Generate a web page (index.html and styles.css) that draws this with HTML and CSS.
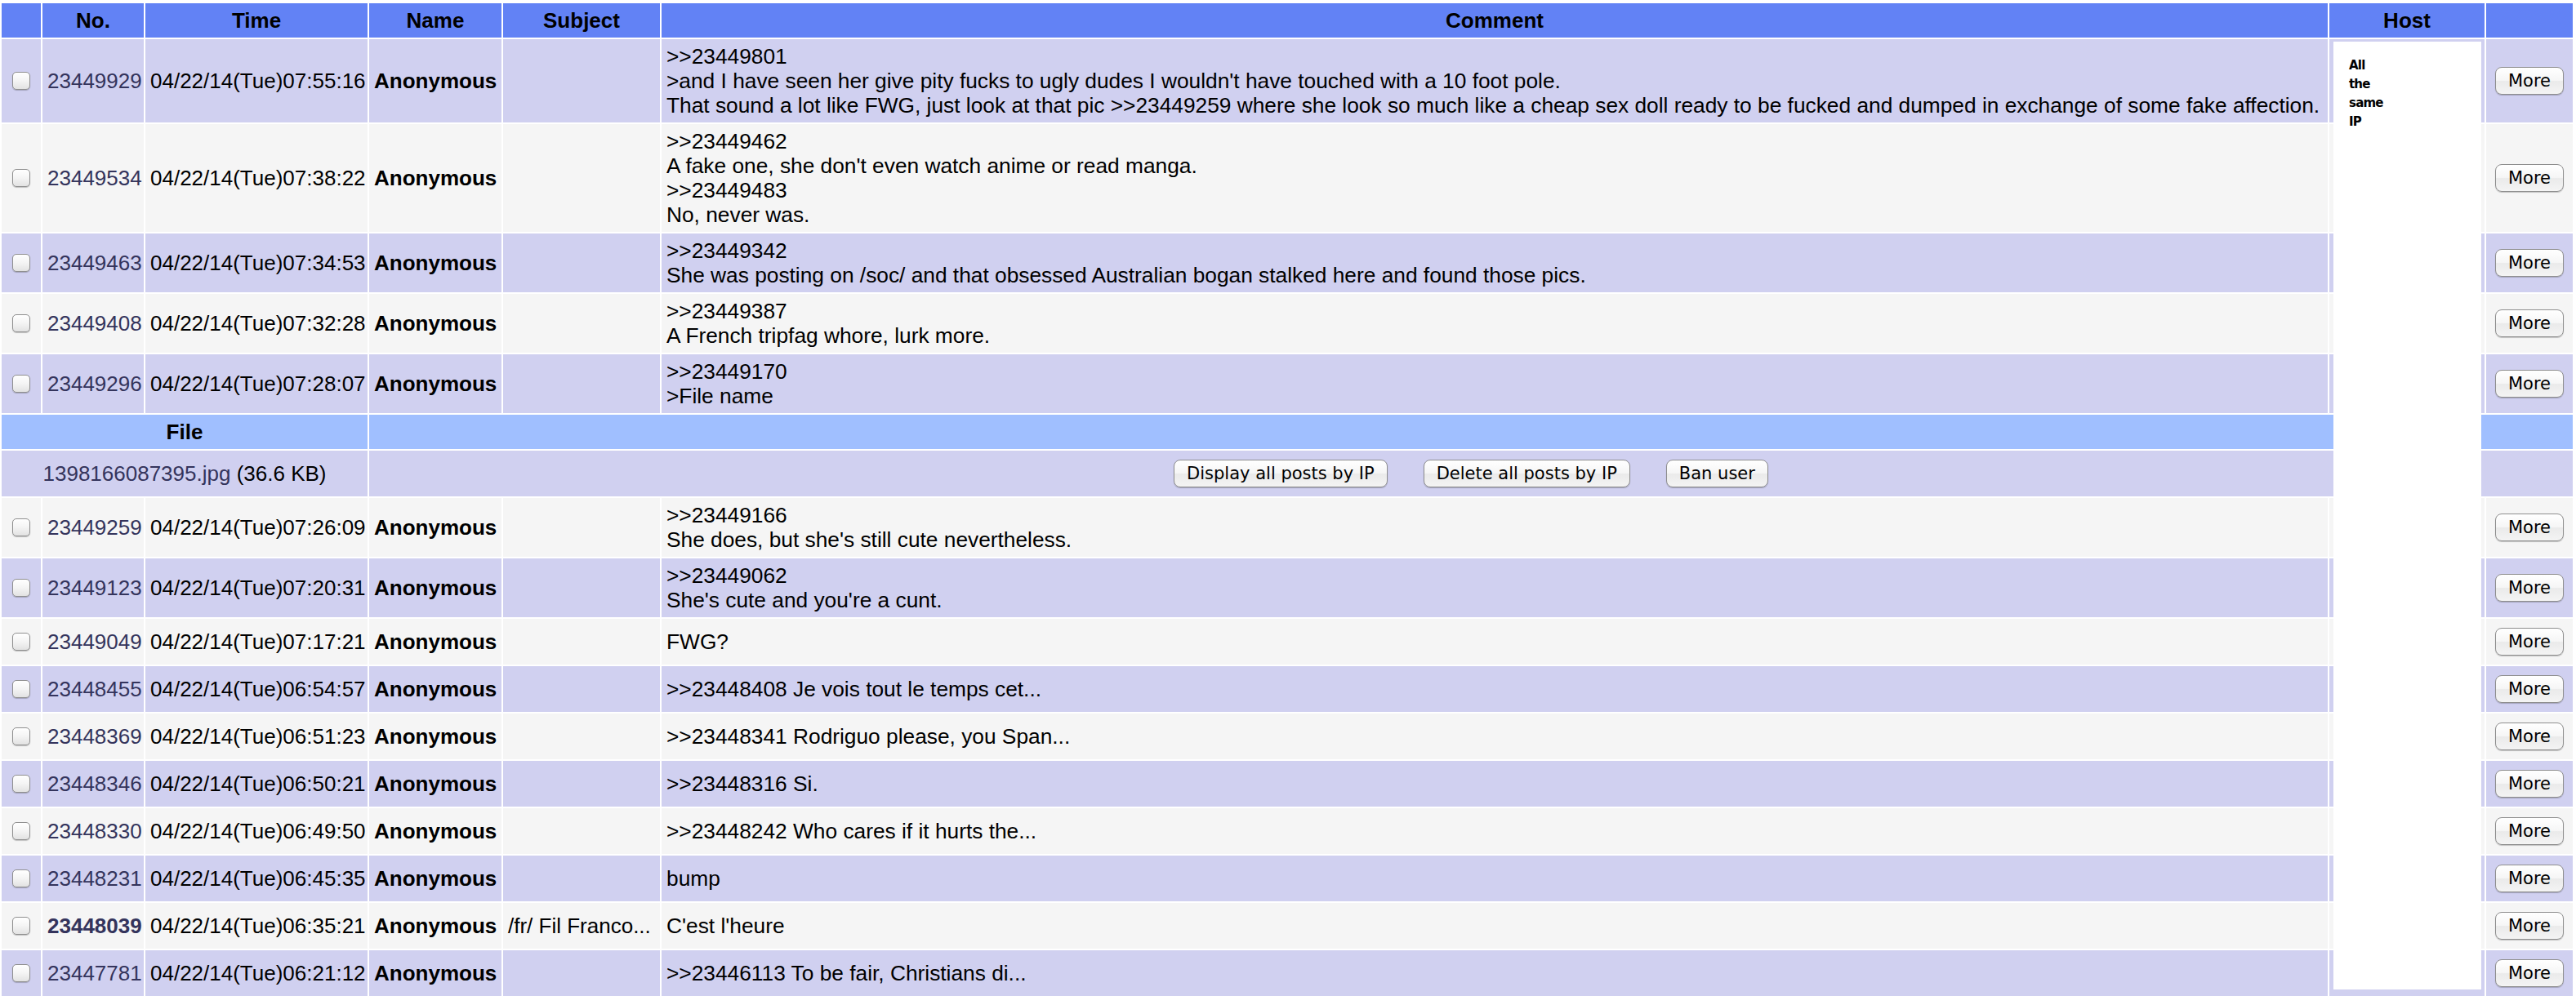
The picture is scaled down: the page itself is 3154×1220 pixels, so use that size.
FILE: index.html
```html
<!DOCTYPE html>
<html>
<head>
<meta charset="utf-8">
<title>Posts</title>
<link rel="stylesheet" href="styles.css">
</head>
<body>
<div class="wrap">
<table class="posts">
  <thead>
    <tr class="head">
      <th class="c-cb"></th>
      <th class="c-no">No.</th>
      <th class="c-time">Time</th>
      <th class="c-name">Name</th>
      <th class="c-subj">Subject</th>
      <th class="c-com">Comment</th>
      <th class="c-host">Host</th>
      <th class="c-more"></th>
    </tr>
  </thead>
  <tbody>
    <tr class="row-a">
      <td><input type="checkbox" class="cb"></td>
      <td><a class="pno">23449929</a></td>
      <td>04/22/14(Tue)07:55:16</td>
      <td class="name">Anonymous</td>
      <td></td>
      <td class="com">&gt;&gt;23449801<br>&gt;and I have seen her give pity fucks to ugly dudes I wouldn't have touched with a 10 foot pole.<br>That sound a lot like FWG, just look at that pic &gt;&gt;23449259 where she look so much like a cheap sex doll ready to be fucked and dumped in exchange of some fake affection.</td>
      <td></td>
      <td class="more"><button class="btn">More</button></td>
    </tr>
    <tr class="row-b">
      <td><input type="checkbox" class="cb"></td>
      <td><a class="pno">23449534</a></td>
      <td>04/22/14(Tue)07:38:22</td>
      <td class="name">Anonymous</td>
      <td></td>
      <td class="com">&gt;&gt;23449462<br>A fake one, she don't even watch anime or read manga.<br>&gt;&gt;23449483<br>No, never was.</td>
      <td></td>
      <td class="more"><button class="btn">More</button></td>
    </tr>
    <tr class="row-a">
      <td><input type="checkbox" class="cb"></td>
      <td><a class="pno">23449463</a></td>
      <td>04/22/14(Tue)07:34:53</td>
      <td class="name">Anonymous</td>
      <td></td>
      <td class="com">&gt;&gt;23449342<br>She was posting on /soc/ and that obsessed Australian bogan stalked here and found those pics.</td>
      <td></td>
      <td class="more"><button class="btn">More</button></td>
    </tr>
    <tr class="row-b">
      <td><input type="checkbox" class="cb"></td>
      <td><a class="pno">23449408</a></td>
      <td>04/22/14(Tue)07:32:28</td>
      <td class="name">Anonymous</td>
      <td></td>
      <td class="com">&gt;&gt;23449387<br>A French tripfag whore, lurk more.</td>
      <td></td>
      <td class="more"><button class="btn">More</button></td>
    </tr>
    <tr class="row-a">
      <td><input type="checkbox" class="cb"></td>
      <td><a class="pno">23449296</a></td>
      <td>04/22/14(Tue)07:28:07</td>
      <td class="name">Anonymous</td>
      <td></td>
      <td class="com">&gt;&gt;23449170<br>&gt;File name</td>
      <td></td>
      <td class="more"><button class="btn">More</button></td>
    </tr>
    <tr class="file-head">
      <th colspan="3">File</th>
      <th colspan="5"></th>
    </tr>
    <tr class="row-a">
      <td colspan="3" class="fname"><a class="pno">1398166087395.jpg</a> (36.6 KB)</td>
      <td colspan="5">
        <div class="actions">
          <button class="btn">Display all posts by IP</button>
          <button class="btn">Delete all posts by IP</button>
          <button class="btn">Ban user</button>
        </div>
      </td>
    </tr>
    <tr class="row-b">
      <td><input type="checkbox" class="cb"></td>
      <td><a class="pno">23449259</a></td>
      <td>04/22/14(Tue)07:26:09</td>
      <td class="name">Anonymous</td>
      <td></td>
      <td class="com">&gt;&gt;23449166<br>She does, but she's still cute nevertheless.</td>
      <td></td>
      <td class="more"><button class="btn">More</button></td>
    </tr>
    <tr class="row-a">
      <td><input type="checkbox" class="cb"></td>
      <td><a class="pno">23449123</a></td>
      <td>04/22/14(Tue)07:20:31</td>
      <td class="name">Anonymous</td>
      <td></td>
      <td class="com">&gt;&gt;23449062<br>She's cute and you're a cunt.</td>
      <td></td>
      <td class="more"><button class="btn">More</button></td>
    </tr>
    <tr class="row-b">
      <td><input type="checkbox" class="cb"></td>
      <td><a class="pno">23449049</a></td>
      <td>04/22/14(Tue)07:17:21</td>
      <td class="name">Anonymous</td>
      <td></td>
      <td class="com">FWG?</td>
      <td></td>
      <td class="more"><button class="btn">More</button></td>
    </tr>
    <tr class="row-a">
      <td><input type="checkbox" class="cb"></td>
      <td><a class="pno">23448455</a></td>
      <td>04/22/14(Tue)06:54:57</td>
      <td class="name">Anonymous</td>
      <td></td>
      <td class="com">&gt;&gt;23448408 Je vois tout le temps cet...</td>
      <td></td>
      <td class="more"><button class="btn">More</button></td>
    </tr>
    <tr class="row-b">
      <td><input type="checkbox" class="cb"></td>
      <td><a class="pno">23448369</a></td>
      <td>04/22/14(Tue)06:51:23</td>
      <td class="name">Anonymous</td>
      <td></td>
      <td class="com">&gt;&gt;23448341 Rodriguo please, you Span...</td>
      <td></td>
      <td class="more"><button class="btn">More</button></td>
    </tr>
    <tr class="row-a">
      <td><input type="checkbox" class="cb"></td>
      <td><a class="pno">23448346</a></td>
      <td>04/22/14(Tue)06:50:21</td>
      <td class="name">Anonymous</td>
      <td></td>
      <td class="com">&gt;&gt;23448316 Si.</td>
      <td></td>
      <td class="more"><button class="btn">More</button></td>
    </tr>
    <tr class="row-b">
      <td><input type="checkbox" class="cb"></td>
      <td><a class="pno">23448330</a></td>
      <td>04/22/14(Tue)06:49:50</td>
      <td class="name">Anonymous</td>
      <td></td>
      <td class="com">&gt;&gt;23448242 Who cares if it hurts the...</td>
      <td></td>
      <td class="more"><button class="btn">More</button></td>
    </tr>
    <tr class="row-a">
      <td><input type="checkbox" class="cb"></td>
      <td><a class="pno">23448231</a></td>
      <td>04/22/14(Tue)06:45:35</td>
      <td class="name">Anonymous</td>
      <td></td>
      <td class="com">bump</td>
      <td></td>
      <td class="more"><button class="btn">More</button></td>
    </tr>
    <tr class="row-b">
      <td><input type="checkbox" class="cb"></td>
      <td><a class="pno op">23448039</a></td>
      <td>04/22/14(Tue)06:35:21</td>
      <td class="name">Anonymous</td>
      <td>/fr/ Fil Franco...</td>
      <td class="com">C'est l'heure</td>
      <td></td>
      <td class="more"><button class="btn">More</button></td>
    </tr>
    <tr class="row-a">
      <td><input type="checkbox" class="cb"></td>
      <td><a class="pno">23447781</a></td>
      <td>04/22/14(Tue)06:21:12</td>
      <td class="name">Anonymous</td>
      <td></td>
      <td class="com">&gt;&gt;23446113 To be fair, Christians di...</td>
      <td></td>
      <td class="more"><button class="btn">More</button></td>
    </tr>
  </tbody>
</table>
<div class="hostbox">All<br>the<br>same<br>IP</div>
</div>
</body>
</html>
```

FILE: styles.css
```css
* {
  box-sizing: border-box;
}

html,
body {
  margin: 0;
  padding: 0;
  background: #ffffff;
}

body {
  font-family: "Liberation Sans", Arial, sans-serif;
  font-size: 26px;
  line-height: 30px;
  color: #000000;
}

.wrap {
  position: relative;
  width: 3152px;
  padding-top: 2px;
}

.posts {
  width: 3152px;
  border-collapse: separate;
  border-spacing: 2px;
  table-layout: fixed;
}

.posts th,
.posts td {
  padding: 6px;
  white-space: nowrap;
  vertical-align: middle;
  overflow: visible;
}

.head th {
  background: #6282f5;
  font-weight: bold;
  text-align: center;
}

.c-cb { width: 48px; }
.c-no { width: 124px; }
.c-time { width: 272px; }
.c-name { width: 162px; }
.c-subj { width: 192px; }
.c-com { width: 2040px; }
.c-host { width: 190px; }
.c-more { width: 106px; }

.row-a td {
  background: #d0d0f0;
}

.row-b td {
  background: #f5f5f5;
}

.file-head th {
  background: #a0bfff;
  font-weight: bold;
  text-align: center;
}

.pno {
  color: #34345c;
  text-decoration: none;
}

.op {
  font-weight: bold;
}

.name {
  font-weight: bold;
}

.com {
  text-align: left;
  font-size: 26.3px;
}

.fname {
  text-align: center;
}

.more {
  text-align: center;
}

.cb {
  -webkit-appearance: none;
  appearance: none;
  display: block;
  width: 22px;
  height: 22px;
  margin: 0 auto;
  border: 1px solid #8f8f8f;
  border-radius: 5px;
  background: linear-gradient(#ffffff, #f4f4f4 50%, #e2e2e2);
  box-shadow: 0 1px 1px rgba(0, 0, 0, 0.22);
}

.btn {
  display: inline-block;
  height: 34px;
  margin: 5px 0;
  padding: 0 15px;
  font-family: "DejaVu Sans", "Lucida Grande", sans-serif;
  font-size: 21px;
  line-height: 32px;
  color: #000000;
  border: 1px solid #8e8e8e;
  border-radius: 8px;
  background: linear-gradient(#ffffff 0%, #f6f6f6 48%, #eaeaea 52%, #f4f4f4 100%);
  box-shadow: 0 1px 1px rgba(0, 0, 0, 0.22);
  vertical-align: middle;
}

.actions {
  display: flex;
  justify-content: center;
  align-items: center;
  gap: 44px;
}

.hostbox {
  position: absolute;
  left: 2857px;
  top: 51px;
  width: 181px;
  height: 1161px;
  background: #ffffff;
  padding: 18px 0 0 19px;
  font-family: "Comic Sans MS", "DejaVu Sans", sans-serif;
  font-weight: bold;
  font-size: 15px;
  line-height: 23px;
  letter-spacing: -0.8px;
  color: #000000;
}
```
